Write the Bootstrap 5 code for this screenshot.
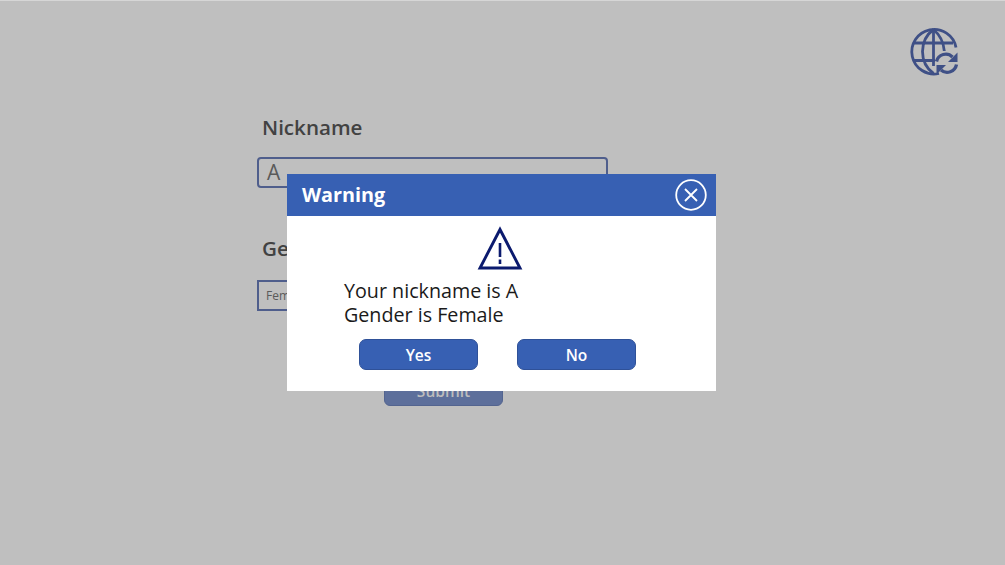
<!DOCTYPE html>
<html lang="en">
<head>
<meta charset="utf-8">
<title>Warning</title>
<link href="https://cdn.jsdelivr.net/npm/bootstrap@5.3.0/dist/css/bootstrap.min.css" rel="stylesheet">
<style>
html,body{height:100%;overflow:hidden}
body{background:#bfbfbf;font-family:"Open Sans",sans-serif;border-top:1px solid #d6d6d6}
.stage{position:relative;width:1005px;height:564px}
.globe-ico{position:absolute;left:908px;top:25px}
.form-area{width:351px;margin-left:257px;padding-top:111px}
.fld-label{font-size:20.600px;font-weight:600;color:#424242;line-height:30px;padding-left:5px;margin:0}
.fld-input{height:31px;border:2px solid #4f5e8c;border-radius:4px;margin-top:15px;padding-left:8px;font-size:21px;line-height:27px;font-weight:400;color:#5a5a5a;background:#bfbfbf}
.fld-select{height:31px;border:2px solid #4f5e8c;margin-top:17px;padding-left:7px;font-size:12px;line-height:28px;color:#5a5a5a}
.label-gap{margin-top:45px}
.submit-row{margin-top:64px;padding-left:127px}
.submit-btn{width:119px;height:31px;background:#5d6f9b;border:1px solid #53648f;border-radius:6px;color:#bdbdbd;font-size:15.500px;font-weight:600;line-height:31px;text-align:center}
.warn-dialog{position:absolute;left:287px;top:173px;width:429px;height:217px;background:#fff}
.warn-head{height:42px;background:#3760b3;padding:0 9px 0 15px}
.warn-title{font-size:19.800px;font-weight:700;color:#fff;line-height:42px}
.close-ico{display:block}
.warn-body{height:175px;padding-top:10px}
.warn-text{font-size:19.700px;line-height:24px;color:#1a1a1a;margin:9px 0 0 57px}
.warn-btns{gap:39px;margin:12px 0 0 72px}
.warn-btn{width:119px;height:31px;padding:1px 0 0;background:#3760b3;border:1px solid #2f5198;border-radius:7px;color:#fff;font-size:15.500px;font-weight:600;line-height:29px}
.warn-btn:hover{background:#3760b3;color:#fff;border-color:#2f5198}
</style>
</head>
<body>
<div class="stage">
  <svg class="globe-ico" width="52" height="52" viewBox="0 0 52 52" fill="none" stroke="#3f5086" stroke-width="2.800">
    <path d="M31 47.500A22.300 22.300 0 1 1 48 21.500"/>
    <path d="M25.500 3.500C18 9 14.500 17 14.500 25.500S18 42 25.500 47.500"/>
    <path d="M25.500 3.500C32 9 35.500 15 36.300 25"/>
    <path d="M25.500 3.500V40"/>
    <path d="M6 17H45M6 34.500H27"/>
    <path d="M28.500 35.500A9.500 9.500 0 0 1 44.500 31" stroke-width="3.300"/>
    <path d="M49.500 26.500V36H40Z" fill="#3f5086" stroke="none"/>
    <path d="M48.500 38.500A9.500 9.500 0 0 1 33 44" stroke-width="3.300"/>
    <path d="M28.500 48.500V39H38Z" fill="#3f5086" stroke="none"/>
  </svg>

  <div class="form-area">
    <p class="fld-label">Nickname</p>
    <div class="fld-input">A</div>
    <p class="fld-label label-gap">Gender</p>
    <div class="fld-select"><span>Female</span></div>
    <div class="submit-row"><div class="submit-btn">Submit</div></div>
  </div>

  <div class="warn-dialog" role="dialog">
    <div class="warn-head d-flex align-items-center justify-content-between">
      <span class="warn-title">Warning</span>
      <svg class="close-ico" width="32" height="32" viewBox="0 0 32 32" fill="none" stroke="#fff">
        <circle cx="16" cy="16" r="14.800" stroke-width="1.800"/>
        <path d="M10 10L22 22M22 10L10 22" stroke-width="1.800"/>
      </svg>
    </div>
    <div class="warn-body">
      <svg class="d-block warn-tri" style="margin-left:190px" width="46" height="44" viewBox="0 0 46 44" fill="none" stroke="#0b1a6e">
        <path d="M23 3.500L3 42H43Z" stroke-width="2.900"/>
        <path d="M23 17V31M23 33.500V38" stroke-width="2.600"/>
      </svg>
      <p class="warn-text">Your nickname is A<br>Gender is Female</p>
      <div class="warn-btns d-flex">
        <button type="button" class="btn warn-btn">Yes</button>
        <button type="button" class="btn warn-btn">No</button>
      </div>
    </div>
  </div>
</div>
<script src="https://cdn.jsdelivr.net/npm/bootstrap@5.3.0/dist/js/bootstrap.bundle.min.js"></script>
</body>
</html>
